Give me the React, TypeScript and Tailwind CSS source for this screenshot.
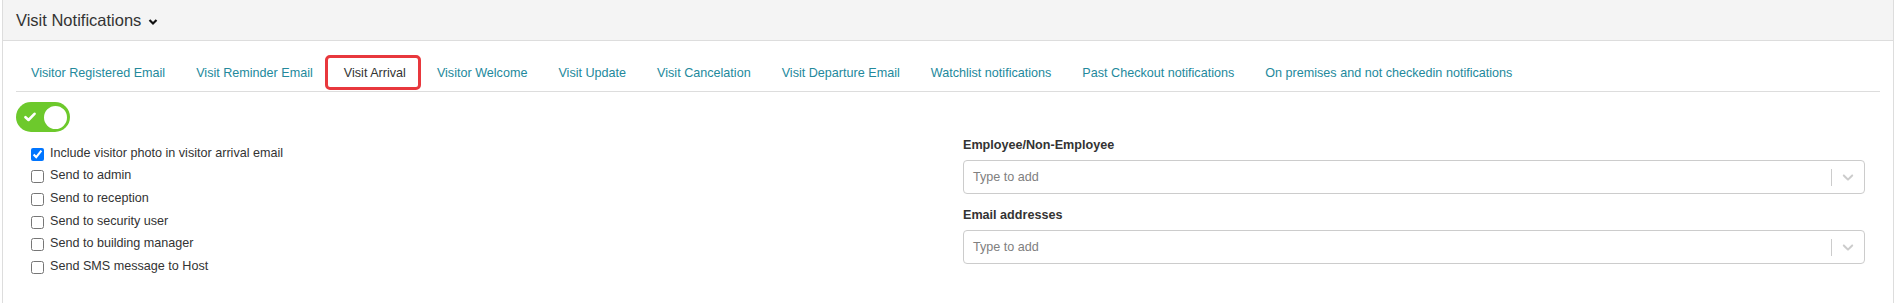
import React from "react";

const tabs = [
  "Visitor Registered Email",
  "Visit Reminder Email",
  "Visit Arrival",
  "Visitor Welcome",
  "Visit Update",
  "Visit Cancelation",
  "Visit Departure Email",
  "Watchlist notifications",
  "Past Checkout notifications",
  "On premises and not checkedin notifications",
];

const options = [
  { label: "Include visitor photo in visitor arrival email", checked: true },
  { label: "Send to admin", checked: false },
  { label: "Send to reception", checked: false },
  { label: "Send to security user", checked: false },
  { label: "Send to building manager", checked: false },
  { label: "Send SMS message to Host", checked: false },
];

const TagSelect = ({ label }: { label: string }) => (
  <div>
    <div className="text-[12.6px] font-bold text-[#333] leading-[17px] mb-[6px]">{label}</div>
    <div className="flex items-center h-[34px] border border-[#cccccc] rounded-[4px] bg-white">
      <div className="flex-1 pl-[9px] text-[12.6px] text-[#808080]">Type to add</div>
      <span className="w-px h-[17px] bg-[#cccccc]" />
      <div className="w-[32px] flex items-center justify-center">
        <svg width="18" height="18" viewBox="0 0 20 20" fill="#cccccc">
          <path d="M4.516 7.548c0.436-0.446 1.043-0.481 1.576 0l3.908 3.747 3.908-3.747c0.533-0.481 1.141-0.446 1.574 0 0.436 0.445 0.408 1.197 0 1.615-0.406 0.418-4.695 4.502-4.695 4.502-0.217 0.223-0.502 0.335-0.787 0.335s-0.57-0.112-0.789-0.335c0 0-4.287-4.084-4.695-4.502s-0.436-1.17 0-1.615z" />
        </svg>
      </div>
    </div>
  </div>
);

export default function App() {
  return (
    <div className="w-[1895px] h-[303px] bg-white font-['Liberation_Sans',Arial,sans-serif]">
      <div className="ml-[2px] mr-[1px] border-x border-b border-[#dddddd] bg-white">
        {/* header */}
        <div className="h-[41px] bg-[#f4f4f4] border-b border-[#dddddd] flex items-center pl-[13px]">
          <span className="text-[16.5px] text-[#333] leading-none">Visit Notifications</span>
          <svg className="ml-[7px] mt-[3px]" width="10" height="8" viewBox="0 0 10 8" fill="none">
            <polyline points="1.5,2 5,5.5 8.5,2" stroke="#111" strokeWidth="2.2" />
          </svg>
        </div>

        <div className="px-[13px] pt-[14px] pb-[36px]">
          {/* tabs */}
          <ul className="flex border-b border-[#dddddd]">
            {tabs.map((t) => (
              <li key={t} className="relative mr-[1px]">
                <a
                  className={`block px-[15px] h-[36px] leading-[36px] text-[12.6px] ${
                    t === "Visit Arrival" ? "text-[#333]" : "text-[#23899c]"
                  }`}
                >
                  {t}
                </a>
                {t === "Visit Arrival" && (
                  <span className="absolute left-[-4px] right-0 top-0 bottom-[1px] border-[3px] border-[#e8383d] rounded-[5px]" />
                )}
              </li>
            ))}
          </ul>

          {/* toggle */}
          <div className="mt-[10px] w-[54px] h-[30px] rounded-full bg-[#6dc92c] flex items-center justify-between pl-[8px] pr-[1px]">
            <svg width="12" height="10" viewBox="0 0 12 10" fill="none">
              <polyline points="1.5,5.2 4.5,8 10.5,1.8" stroke="#ffffff" strokeWidth="2.6" strokeLinecap="round" strokeLinejoin="round" />
            </svg>
            <span className="w-[27px] h-[27px] rounded-full bg-white border-[2px] border-[#6dc92c]" />
          </div>

          {/* body */}
          <div className="grid grid-cols-2 mt-[5px]">
            <div className="px-[15px] pt-[5px]">
              {options.map((o) => (
                <label key={o.label} className="flex items-center h-[22.6px] text-[12.6px] text-[#333]">
                  <input
                    type="checkbox"
                    defaultChecked={o.checked}
                    className="w-[13px] h-[13px] m-0 mt-[2px] accent-[#0075ff]"
                  />
                  <span className="ml-[6px]">{o.label}</span>
                </label>
              ))}
            </div>
            <div className="px-[15px] flex flex-col gap-[13px]">
              <TagSelect label="Employee/Non-Employee" />
              <TagSelect label="Email addresses" />
            </div>
          </div>
        </div>
      </div>
    </div>
  );
}
